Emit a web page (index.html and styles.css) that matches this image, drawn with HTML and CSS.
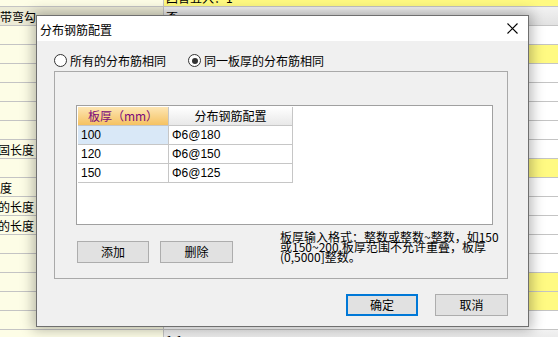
FILE: index.html
```html
<!DOCTYPE html>
<html lang="zh-CN">
<head>
<meta charset="utf-8">
<title>分布钢筋配置</title>
<link rel="stylesheet" href="styles.css">
</head>
<body>
<div class="sheet">
  <div class="row"><div class="lc"></div><div class="rc yellow">四舍五入：1</div></div>
  <div class="row sel"><div class="lc">带弯勾</div><div class="rc grey">否</div></div>
  <div class="row"><div class="lc"></div><div class="rc"></div></div>
  <div class="row"><div class="lc"></div><div class="rc yellow"></div></div>
  <div class="row"><div class="lc"></div><div class="rc"></div></div>
  <div class="row"><div class="lc"></div><div class="rc"></div></div>
  <div class="row"><div class="lc"></div><div class="rc"></div></div>
  <div class="row"><div class="lc"></div><div class="rc"></div></div>
  <div class="row"><div class="lc cut">固长度</div><div class="rc"></div></div>
  <div class="row"><div class="lc"></div><div class="rc yellow"></div></div>
  <div class="row"><div class="lc">度</div><div class="rc"></div></div>
  <div class="row"><div class="lc cut">的长度</div><div class="rc"></div></div>
  <div class="row"><div class="lc cut">的长度</div><div class="rc"></div></div>
  <div class="row"><div class="lc"></div><div class="rc"></div></div>
  <div class="row"><div class="lc"></div><div class="rc"></div></div>
  <div class="row"><div class="lc"></div><div class="rc yellow"></div></div>
  <div class="row"><div class="lc"></div><div class="rc yellow"></div></div>
  <div class="row"><div class="lc"></div><div class="rc">1.0.0</div></div>
  <div class="row"><div class="lc"></div><div class="rc grey">1.1</div></div>
</div>

<div class="dialog">
  <div class="titlebar">
    <span class="title">分布钢筋配置</span>
    <svg class="close" width="11" height="11" viewBox="0 0 11 11"><path d="M0.5 0.5 L10.5 10.5 M10.5 0.5 L0.5 10.5" stroke="#000" stroke-width="1.1" fill="none"/></svg>
  </div>
  <div class="body">
    <div class="radios">
      <div class="radio"><span class="circle"></span><span>所有的分布筋相同</span></div>
      <div class="radio checked"><span class="circle"></span><span>同一板厚的分布筋相同</span></div>
    </div>
    <div class="group">
      <div class="grid">
        <table class="table">
          <thead>
            <tr><th class="h1">板厚（mm）</th><th class="h2">分布钢筋配置</th></tr>
          </thead>
          <tbody>
            <tr><td class="c1 active">100</td><td class="c2">Φ6@180</td></tr>
            <tr><td class="c1">120</td><td class="c2">Φ6@150</td></tr>
            <tr><td class="c1">150</td><td class="c2">Φ6@125</td></tr>
          </tbody>
        </table>
      </div>
      <div class="actions">
        <button class="btn add">添加</button>
        <button class="btn del">删除</button>
        <p class="hint">板厚输入格式：整数或整数~整数，如150<br>或150~200.板厚范围不允许重叠，板厚<br>(0,5000]整数。</p>
      </div>
    </div>
    <div class="footer">
      <button class="btn primary">确定</button>
      <button class="btn">取消</button>
    </div>
  </div>
</div>
</body>
</html>
```
FILE: styles.css
```css
html, body {
  margin: 0;
  padding: 0;
}
body {
  width: 558px;
  height: 337px;
  overflow: hidden;
  position: relative;
  background: #fff;
  font-family: "Noto Sans CJK SC", "Liberation Sans", sans-serif;
  font-size: 12px;
  color: #000;
}

/* background sheet */
.sheet {
  margin-top: -12px;
  display: flex;
  flex-direction: column;
}
.row {
  display: grid;
  grid-template-columns: 164px 1fr;
  height: 19px;
  box-sizing: border-box;
  border-bottom: 1px solid #c4c4c4;
}
.lc {
  background: #fdfde6;
  border-right: 1px solid #c4c4c4;
  line-height: 19px;
  white-space: nowrap;
  overflow: hidden;
}
.cut {
  text-indent: -2px;
}
.row.sel .lc {
  background: #ecebd6;
}
.rc {
  padding-left: 2px;
  line-height: 19px;
  white-space: nowrap;
  overflow: hidden;
}
.yellow {
  background: #fffa82;
}
.grey {
  background: linear-gradient(#f2f2f2, #e2e2e2);
}

/* dialog */
.dialog {
  position: absolute;
  left: 36px;
  top: 15px;
  width: 493px;
  height: 312px;
  box-sizing: border-box;
  border: 1px solid #6f6f6f;
  background: #f0f0f0;
  box-shadow: 0 0 12px 3px rgba(0, 0, 0, 0.28);
  display: flex;
  flex-direction: column;
}
.titlebar {
  height: 25px;
  flex: none;
  background: #fff;
  display: flex;
  align-items: center;
  justify-content: space-between;
  padding: 0 10px 0 3px;
}
.title {
  line-height: 25px;
  padding-top: 1px;
}
.close {
  display: block;
}
.body {
  flex: 1;
  padding: 13px 20px 0 17px;
  display: flex;
  flex-direction: column;
}

.radios {
  display: flex;
  gap: 22px;
  height: 13px;
  align-items: center;
}
.radio {
  display: flex;
  align-items: center;
  gap: 3px;
  line-height: 13px;
}
.circle {
  width: 13px;
  height: 13px;
  box-sizing: border-box;
  border: 1px solid #333;
  border-radius: 50%;
  background: #fff;
  display: flex;
  align-items: center;
  justify-content: center;
}
.radio.checked .circle::after {
  content: "";
  width: 6px;
  height: 6px;
  border-radius: 50%;
  background: #333;
}

.group {
  margin-top: 4px;
  border: 1px solid #a9a9a9;
  padding: 33px 14px 15px 21px;
}
.grid {
  height: 120px;
  box-sizing: border-box;
  border: 1px solid #a0a0a0;
  background: #fff;
  padding: 1px;
}
.table {
  border-collapse: separate;
  border-spacing: 0;
  font-family: "Liberation Sans", "Noto Sans CJK SC", sans-serif;
  font-size: 12px;
}
.table th, .table td {
  height: 18px;
  padding: 0 3px;
  border-right: 1px solid #c6c6c6;
  border-bottom: 1px solid #c6c6c6;
  line-height: 18px;
  white-space: nowrap;
  box-sizing: content-box;
}
.table th {
  font-weight: normal;
  text-align: center;
  font-family: "Noto Sans CJK SC", sans-serif;
}
.h1 {
  width: 84px;
  color: #7a0a7a;
  background: linear-gradient(#fde6b4, #f5c262);
}
.h2 {
  width: 117px;
  background: linear-gradient(#ffffff, #e8e8e8);
}
.c1 {
  padding-left: 2px;
}
.c2 {
  padding-left: 4px;
}
.active {
  background: #d9e8f7;
}

.actions {
  margin-top: 16px;
  height: 22px;
  display: flex;
  align-items: flex-start;
}
.btn {
  flex: none;
  width: 72px;
  height: 22px;
  box-sizing: border-box;
  border: 1px solid #adadad;
  background: #e1e1e1;
  font-family: "Noto Sans CJK SC", sans-serif;
  font-size: 12px;
  color: #000;
  padding: 0;
  line-height: 20px;
  margin: 0;
}
.add {
  margin-left: 1px;
}
.del {
  margin-left: 11px;
  width: 73px;
}
.hint {
  flex: none;
  margin: -9px 0 0 47px;
  line-height: 10px;
  white-space: nowrap;
  font-size: 12px;
}

.footer {
  margin-top: 15px;
  display: flex;
  justify-content: flex-end;
  gap: 17px;
}
.footer .btn {
  width: 73px;
}
.btn.primary {
  border: 2px solid #0078d7;
  width: 72px;
  line-height: 18px;
}
```
